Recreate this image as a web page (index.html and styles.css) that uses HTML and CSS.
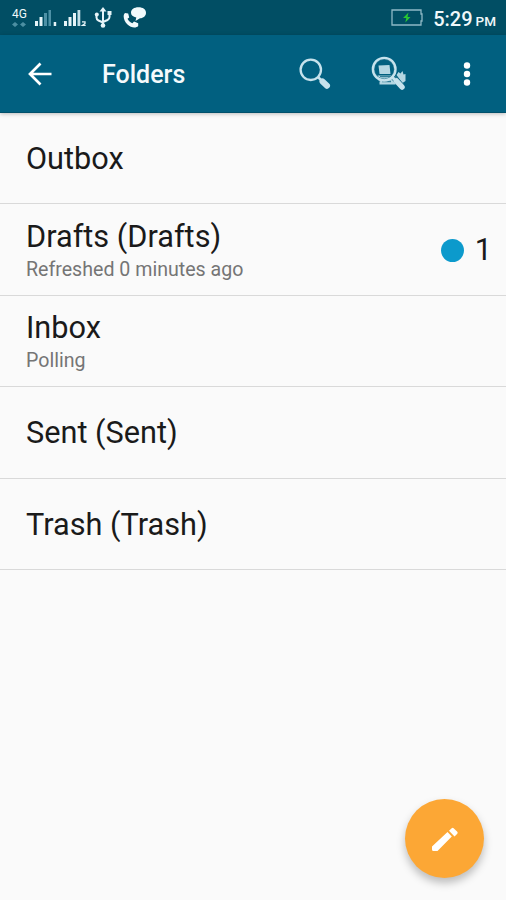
FILE: index.html
```html
<!DOCTYPE html>
<html lang="en">
<head>
  <meta charset="UTF-8">
  <meta name="viewport" content="width=device-width, initial-scale=1.0">
  <title>Folders</title>
  <link rel="stylesheet" href="styles.css">
</head>
<body>
  <!-- Status bar -->
  <div class="status-bar">
    <div class="status-icons">
      <div class="network">
        <span>4G</span>
        <svg width="14" height="5" viewBox="0 0 14 5"><path d="M0 2.5L3 0l3 2.5L3 5zM8 2.5L11 0l3 2.5L11 5z" fill="#4c8fa2"/></svg>
      </div>
      <svg class="signal" width="22" height="18" viewBox="0 0 22 18">
        <path d="M0 12h3v5H0zM4.500 8h3v9h-3z" fill="#e6f4f8"/>
        <path d="M9 4h3v13H9zM13.500 1h2.500v16h-2.500z" fill="#4d91a6"/>
        <path d="M18.700 13h2.500v4h-2.500z" fill="#e6f4f8"/>
      </svg>
      <svg class="signal" width="23" height="18" viewBox="0 0 23 18">
        <path d="M0 12h3v5H0zM4.500 8h3v9h-3zM9 4h3v13H9z" fill="#e6f4f8"/>
        <path d="M13.500 1h2.800v16h-2.800z" fill="#c3dfe7"/>
        <path d="M18 12.800h3v1.700l-2.500 1.800h3.200" fill="none" stroke="#e6f4f8" stroke-width="1.300"/>
      </svg>
      <svg class="usb" width="18" height="22" viewBox="0 0 18 22" fill="none" stroke="#e6f4f8" stroke-width="2">
        <path d="M9 3v16M2.500 8v2.500q0 2 2 3L9 15.500M15.500 6v4q0 2-2 3L9 15"/>
        <path d="M9 0l3.500 4.500h-7z" fill="#e6f4f8" stroke="none"/>
        <circle cx="9" cy="18.500" r="2.300" fill="#e6f4f8" stroke="none"/>
        <circle cx="2.800" cy="7.500" r="2" fill="#e6f4f8" stroke="none"/>
        <path d="M13.500 4h4v4h-4z" fill="#e6f4f8" stroke="none"/>
      </svg>
      <svg class="call" width="24" height="21" viewBox="0 0 24 21" fill="#f2fafc">
        <path d="M15.500.3c4.500 0 7.500 2.200 7.500 5.400s-2.500 5.300-6 5.600L12.500 14l.8-3.500C10 9.700 8 8.200 8 5.700 8 2.500 11 .3 15.500.3z"/>
        <path d="M2 6l3.200.5 1 4-1.700 1.200c1 2.200 2.800 3.900 4.900 4.500l1.600-1.700 4.200 1.700v2.800c-2 2.300-7.200 2-10.700-1.500S-.7 8.500 2 6z"/>
      </svg>
    </div>
    <div class="status-right">
      <svg class="battery" width="32" height="17" viewBox="0 0 32 17">
        <path d="M1 1h29v4h1v7h-1v4H1z" fill="none" stroke="#8fb9c6" stroke-width="1.300"/>
        <path d="M17.500 3.500L12 9h3.300l-1 4.500L19.500 8h-3z" fill="#27c832"/>
      </svg>
      <span class="time">5:29</span>
      <span class="meridiem">PM</span>
    </div>
  </div>

  <!-- Toolbar -->
  <header class="toolbar">
    <svg class="back" width="24" height="24" viewBox="0 0 24 24" fill="none" stroke="#fff" stroke-width="2.700"><path d="M23.500 12H2.500M12.500 1.500L2 12l10.500 10.500"/></svg>
    <h1>Folders</h1>
    <svg class="search" width="32" height="32" viewBox="0 0 32 32">
      <circle cx="11.800" cy="11.800" r="10.200" fill="none" stroke="#c6e2ec" stroke-width="2.300"/>
      <path d="M19 19l4 4" stroke="#c6e2ec" stroke-width="2.500"/>
      <path d="M23.500 23.500l4.500 4.200" stroke="#c6e2ec" stroke-width="6" stroke-linecap="round"/>
    </svg>
    <svg class="search-remote" width="36" height="36" viewBox="0 0 36 36">
      <path d="M7.500 9.500l11-.5 1 9H8.500zM6.500 19.500h14l4 4v5H8.500v-3l2-1h-3zM25.500 19l2-3 2 1.500 2-2.500 1 3.500 2-.5v7l-3 2z" fill="#b4d7e3"/>
      <path d="M9 20.500h10l2 2M11 25.500h9" fill="none" stroke="#347f98" stroke-width="1.400"/>
      <circle cx="13.200" cy="13.200" r="9.900" fill="none" stroke="#267690" stroke-width="1"/>
      <circle cx="13.200" cy="13.200" r="11.300" fill="none" stroke="#c6e2ec" stroke-width="2.400"/>
      <path d="M22.500 21.500L31 30" stroke="#267690" stroke-width="5.500"/>
      <path d="M21 21l4 4" stroke="#c6e2ec" stroke-width="3"/>
      <path d="M25.500 25l5.500 6" stroke="#c6e2ec" stroke-width="5.500" stroke-linecap="round"/>
    </svg>
    <svg class="more" width="8" height="24" viewBox="0 0 8 24" fill="#fff"><circle cx="4" cy="3.500" r="3.200"/><circle cx="4" cy="12" r="3.200"/><circle cx="4" cy="20.500" r="3.200"/></svg>
  </header>

  <!-- Folder list -->
  <ul class="folders">
    <li class="folder">
      <div class="folder-info"><h2>Outbox</h2></div>
    </li>
    <li class="folder">
      <div class="folder-info">
        <h2>Drafts (Drafts)</h2>
        <p>Refreshed 0 minutes ago</p>
      </div>
      <div class="unread"><span class="dot"></span><span class="count">1</span></div>
    </li>
    <li class="folder">
      <div class="folder-info">
        <h2>Inbox</h2>
        <p>Polling</p>
      </div>
    </li>
    <li class="folder">
      <div class="folder-info"><h2>Sent (Sent)</h2></div>
    </li>
    <li class="folder">
      <div class="folder-info"><h2>Trash (Trash)</h2></div>
    </li>
  </ul>

  <!-- Compose button -->
  <button class="compose" aria-label="Compose">
    <svg width="28" height="28" viewBox="0 0 28 28" fill="#fff">
      <path d="M1 21.500L16.500 7l4.300 4.500L6.500 26H2.500q-1.500 0-1.500-1.500zM18 5.700l2.700-2.500q1-.8 1.900 0l3.700 3.600q.8.900 0 1.900L23.500 11.500z"/>
    </svg>
  </button>
</body>
</html>
```

FILE: styles.css
```css
* {
  box-sizing: border-box;
}
body {
  margin: 0;
  height: 900px;
  overflow: hidden;
  background: #fafafa;
  font-family: Roboto, "Liberation Sans", sans-serif;
  color: #1a1a1a;
}
svg {
  display: block;
  flex: none;
}
.status-bar {
  display: flex;
  justify-content: space-between;
  height: 34.5px;
  background: #014e64;
  color: #f0f8fa;
}
.status-icons {
  display: flex;
  padding-left: 12px;
}
.network {
  width: 15px;
  margin-right: 8px;
  padding-top: 8px;
  font-size: 12px;
  line-height: 12px;
}
.network svg {
  margin-top: 2px;
}
.signal {
  margin: 9px 7px 0 0;
}
.usb {
  margin: 7px 10px 0 0;
}
.call {
  margin: 7px 0 0 1px;
}
.status-right {
  display: flex;
  align-items: baseline;
  padding-right: 10px;
  line-height: 38px;
}
.battery {
  align-self: flex-start;
  margin: 9px 10px 0 0;
}
.time {
  font-size: 20px;
  font-weight: 500;
}
.meridiem {
  margin-left: 3px;
  font-size: 13.5px;
  font-weight: 500;
}
.toolbar {
  display: flex;
  align-items: center;
  height: 78px;
  padding: 1px 35px 0 28px;
  background: #016080;
  border-bottom: 1px solid #01506b;
  box-shadow: 0 1px 4px rgba(0, 0, 0, 0.25);
  color: #f5fafc;
}
.toolbar h1 {
  margin: 3px auto 0 50px;
  font-size: 25px;
  font-weight: 500;
  line-height: 32px;
}
.search {
  margin-right: 40px;
}
.search-remote {
  margin-right: 56px;
}
.folders {
  margin: 0;
  padding: 0;
  list-style: none;
}
.folder {
  display: flex;
  align-items: center;
  justify-content: space-between;
  height: 91.5px;
  padding: 1.6px 14px 0 26px;
  border-bottom: 1px solid #d9d9d9;
}
.folder h2 {
  margin: 0;
  font-size: 30.7px;
  font-weight: 400;
  line-height: 36px;
}
.folder p {
  margin: 3px 0 0;
  font-size: 19.6px;
  line-height: 24px;
  color: #757575;
}
.unread {
  display: flex;
  align-items: center;
}
.dot {
  width: 23px;
  height: 23px;
  margin-right: 11px;
  border-radius: 50%;
  background: #0c9acc;
}
.count {
  font-size: 30.7px;
  line-height: 36px;
}
.compose {
  position: fixed;
  right: 22px;
  bottom: 22px;
  display: flex;
  align-items: center;
  justify-content: center;
  width: 79px;
  height: 79px;
  padding: 0;
  border: none;
  border-radius: 50%;
  background: #fca735;
  box-shadow: 0 5px 9px rgba(0, 0, 0, 0.25);
  cursor: pointer;
}
```
